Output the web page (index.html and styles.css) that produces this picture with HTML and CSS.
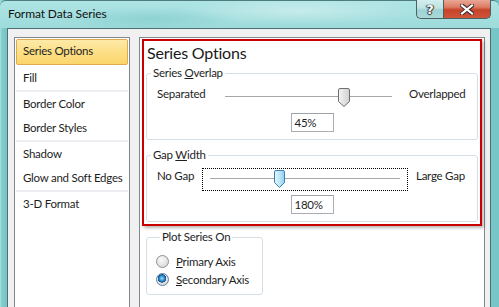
FILE: index.html
```html
<!DOCTYPE html>
<html lang="en">
<head>
  <meta charset="UTF-8" />
  <title>Format Data Series</title>
  <link rel="stylesheet" href="styles.css">
</head>
<body>
  <div class="window">
    <div class="titlebar">
      <span class="title">Format Data Series</span>
      <div class="caption-buttons">
        <div class="cap-btn help"><span>?</span></div>
        <div class="cap-btn close">
          <svg width="14" height="11" viewBox="0 0 14 11">
            <path d="M2 1.5 L12 9.5 M12 1.5 L2 9.5" stroke="#3a2a28" stroke-width="4.2" stroke-linecap="square"/>
            <path d="M2 1.5 L12 9.5 M12 1.5 L2 9.5" stroke="#fff" stroke-width="2.2" stroke-linecap="square"/>
          </svg>
        </div>
      </div>
    </div>

    <div class="client">
      <!-- category list -->
      <ul class="nav">
        <li class="nav-item active">Series Options</li>
        <li class="nav-item">Fill</li>
        <li class="sep"></li>
        <li class="nav-item">Border Color</li>
        <li class="nav-item">Border Styles</li>
        <li class="sep"></li>
        <li class="nav-item">Shadow</li>
        <li class="nav-item">Glow and Soft Edges</li>
        <li class="sep"></li>
        <li class="nav-item">3-D Format</li>
      </ul>

      <div class="panel">
        <div class="highlight">
          <h2>Series Options</h2>

          <fieldset class="group">
            <legend>Series <u>O</u>verlap</legend>
            <div class="slider-row overlap">
              <span class="lbl">Separated</span>
              <div class="slider">
                <svg class="thumb" style="left: 120px" width="12" height="19" viewBox="0 0 12 19">
                  <defs>
                    <linearGradient id="gray" x1="0" x2="1" y1="0" y2="0">
                      <stop offset="0" stop-color="#f4f4f4"/>
                      <stop offset="0.5" stop-color="#e2e2e2"/>
                      <stop offset="1" stop-color="#cfcfcf"/>
                    </linearGradient>
                  </defs>
                  <path d="M2 0.5 H10 Q11.5 0.5 11.5 2 V13.5 L6 18.5 L0.5 13.5 V2 Q0.5 0.5 2 0.5 Z" fill="url(#gray)" stroke="#707070"/>
                </svg>
              </div>
              <span class="lbl right">Overlapped</span>
            </div>
            <div class="value">45%</div>
          </fieldset>

          <fieldset class="group gap">
            <legend>Gap <u>W</u>idth</legend>
            <div class="slider-row gap-row">
              <span class="lbl">No Gap</span>
              <div class="slider focused">
                <svg class="thumb" style="left: 71px" width="11" height="18" viewBox="0 0 11 18">
                  <defs>
                    <linearGradient id="blue" x1="0" x2="1" y1="0" y2="0">
                      <stop offset="0" stop-color="#e6f6fd"/>
                      <stop offset="0.5" stop-color="#bfe6f9"/>
                      <stop offset="1" stop-color="#8fd0f1"/>
                    </linearGradient>
                  </defs>
                  <path d="M2 0.5 H9 Q10.5 0.5 10.5 2 V12.5 L5.5 17.5 L0.5 12.5 V2 Q0.5 0.5 2 0.5 Z" fill="url(#blue)" stroke="#3c7fb1"/>
                </svg>
              </div>
              <span class="lbl right">Large Gap</span>
            </div>
            <div class="value">180%</div>
          </fieldset>
        </div>

        <fieldset class="group plot">
          <legend>Plot Series On</legend>
          <label class="radio"><span class="dot"></span><span><u>P</u>rimary Axis</span></label>
          <label class="radio"><span class="dot checked"></span><span><u>S</u>econdary Axis</span></label>
        </fieldset>
      </div>
    </div>
  </div>
</body>
</html>
```

FILE: styles.css
```css
body {
  margin: 0;
  width: 499px;
  height: 307px;
  overflow: hidden;
  background: #8fd3d3;
  font-family: Lato, "Noto Sans", sans-serif;
  font-size: 11.5px;
  letter-spacing: -0.25px;
  color: #1e1e1e;
}

.window {
  height: 307px;
  display: flex;
  flex-direction: column;
  background: linear-gradient(to right, #a6e0e0 0, #80cccc 2px, #76c6c7 6px);
}

/* title bar */
.titlebar {
  height: 28px;
  flex: none;
  display: flex;
  align-items: flex-start;
  background:
    radial-gradient(ellipse 120px 14px at 300px 10px, rgba(255,255,255,0.35), transparent),
    radial-gradient(ellipse 90px 12px at 150px 18px, rgba(120,200,200,0.5), transparent),
    linear-gradient(to bottom, #aee4e4, #9edbdb);
  border-top: 1px solid #4f7d7e;
  box-sizing: border-box;
  border-radius: 6px 6px 0 0;
}

.title {
  padding: 5px 0 0 8px;
  line-height: 16px;
  font-size: 12px;
  letter-spacing: -0.1px;
  color: #111;
}

.caption-buttons {
  margin: -1px 8px 0 auto;
  display: flex;
}

.cap-btn {
  height: 19px;
  box-sizing: border-box;
  border: 1px solid #4e5f64;
  border-top: none;
  display: flex;
  align-items: center;
  justify-content: center;
}

.help {
  width: 27px;
  border-right: none;
  border-radius: 0 0 0 5px;
  background: linear-gradient(to bottom, #d3eeee 0, #bfe3e3 45%, #9fd2d2 55%, #a9dada 100%);
}

.help span {
  font-family: "DejaVu Sans", sans-serif;
  font-weight: bold;
  font-size: 13px;
  line-height: 13px;
  color: #fff;
  text-shadow: 0 0 1px #333, 1px 0 1px #333, -1px 0 1px #333, 0 1px 1px #333;
}

.close {
  width: 48px;
  border-radius: 0 0 5px 0;
  background: linear-gradient(to bottom, #e9a897 0, #dc7a62 40%, #c7432a 55%, #d0563a 100%);
}

/* client area */
.client {
  flex: 1;
  margin: 0 8px 0 7px;
  border: 1px solid #4d6f72;
  border-bottom: none;
  background: #f0f0f0;
  padding: 8px 5px 0 6px;
  display: flex;
  gap: 9px;
}

.nav {
  list-style: none;
  margin: 0;
  padding: 1px 0 0;
  width: 114px;
  height: 300px;
  flex: none;
  background: #fff;
  border: 1px solid #828790;
}

.nav-item {
  height: 24px;
  line-height: 24px;
  margin: 0 1px;
  padding-left: 7px;
  white-space: nowrap;
}

.nav-item.active {
  line-height: 22px;
  padding-left: 6px;
  margin-bottom: 1px;
  border: 1px solid #dcac4c;
  border-radius: 2px;
  background: linear-gradient(to bottom, #fdeaa8 0, #fcdf86 50%, #fbd56c 100%);
}

.sep {
  height: 2px;
  margin: 0 1px;
  background: #eceef2;
}

.panel {
  flex: none;
  width: 344px;
  height: 300px;
  background: #fff;
  border: 1px solid #828790;
}

.highlight {
  margin: 1px 2px 0 2px;
  border: 2px solid #c80000;
  box-shadow: 2px 2px 3px rgba(0,0,0,0.28);
  padding-bottom: 2px;
}

h2 {
  margin: 2px 0 0 3px;
  font-size: 16px;
  font-weight: normal;
  letter-spacing: -0.2px;
  line-height: 20px;
  color: #1a1a1a;
}

/* group boxes */
.group {
  margin: 3px 2px 0 2px;
  padding: 0 0 7px;
  border: 1px solid #d5dfe5;
  border-radius: 3px;
  min-width: 0;
}

.group legend {
  margin-left: 4px;
  padding: 0 2px;
  line-height: 14px;
}

.group.gap {
  margin-top: 8px;
}

.slider-row {
  display: grid;
  height: 23px;
  margin-top: 6px;
  align-items: start;
}

.slider-row.overlap {
  grid-template-columns: 70px 183px 1fr;
}

.slider-row.gap-row {
  grid-template-columns: 55px 206px 1fr;
}

.lbl {
  padding-left: 10px;
  line-height: 16px;
}

.lbl.right {
  padding-left: 9px;
}

.gap-row .lbl.right {
  padding-left: 8px;
}

.slider {
  position: relative;
  height: 23px;
  box-sizing: border-box;
  border: 1px dotted transparent;
}

.slider::before {
  content: "";
  position: absolute;
  left: 7px;
  right: 7px;
  top: 9px;
  height: 1px;
  background: #a7a7a7;
  border-bottom: 1px solid #fff;
}

.slider.focused {
  border-color: #000;
}

.thumb {
  position: absolute;
  top: 1px;
}

.value {
  width: 43px;
  height: 19px;
  box-sizing: border-box;
  margin: 4px auto 0;
  padding-left: 3px;
  border: 1px solid #abadb3;
  border-top-color: #9fa2a9;
  line-height: 17px;
}

/* plot series group */
.group.plot {
  width: 117px;
  box-sizing: border-box;
  margin: 4px 0 0 6px;
  padding: 8px 0 6px 9px;
}

.radio {
  display: flex;
  align-items: center;
  gap: 7px;
  height: 18px;
}

.dot {
  width: 13px;
  height: 13px;
  box-sizing: border-box;
  border-radius: 50%;
  border: 1px solid #8f8f8f;
  background: radial-gradient(circle at 40% 35%, #fafafa 0, #e4e4e4 55%, #cfcfcf 100%);
}

.dot.checked {
  border-color: #5b7ea5;
  background:
    radial-gradient(circle at 45% 40%, #a9e0fa 0, #2c8fd0 28%, #14508a 45%, transparent 50%),
    radial-gradient(circle at 40% 35%, #fafafa 0, #e4e4e4 60%, #cfcfcf 100%);
}
```
